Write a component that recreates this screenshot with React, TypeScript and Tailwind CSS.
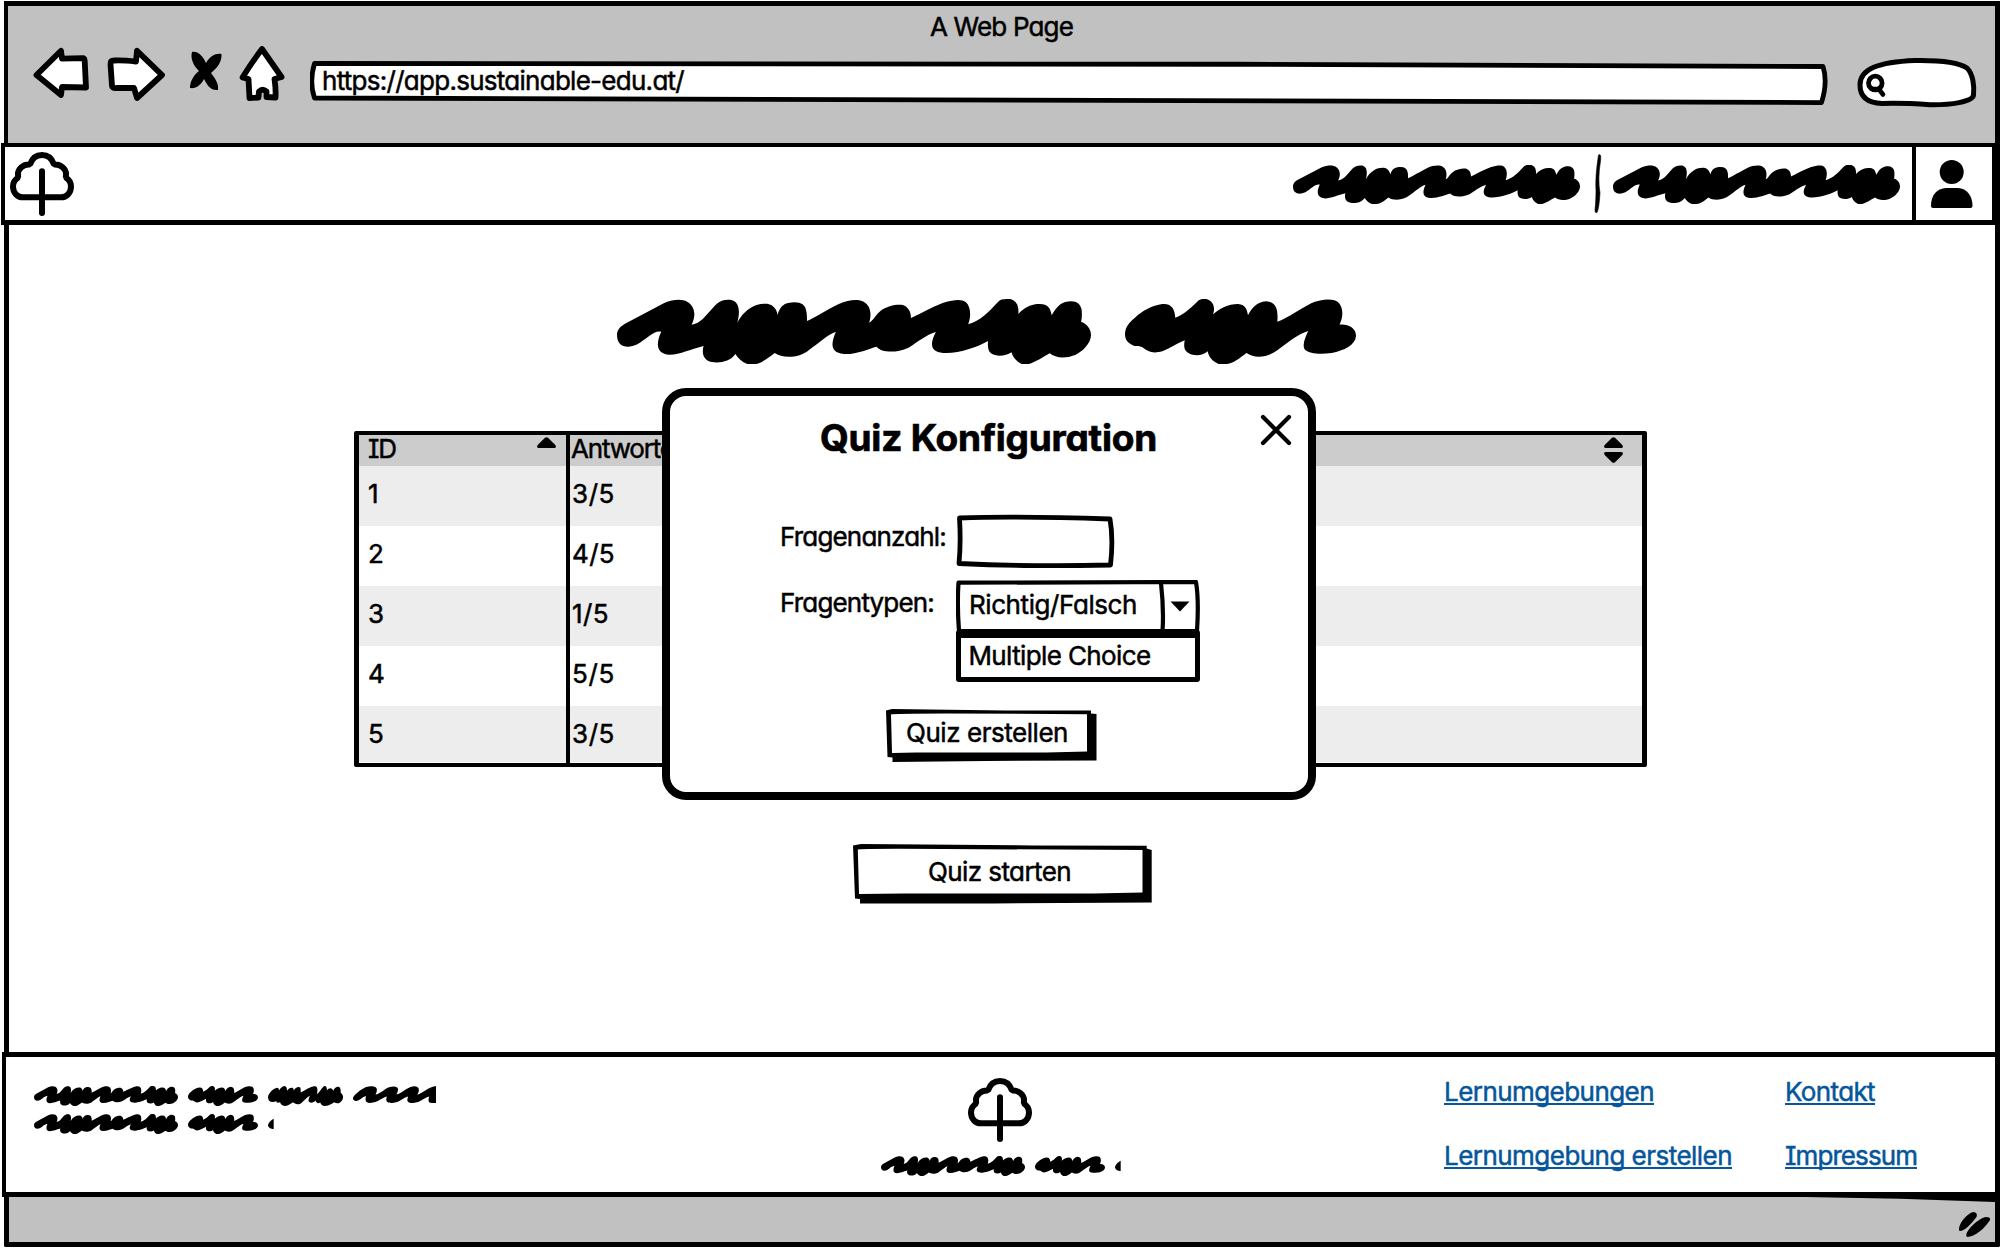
import { useLayoutEffect, useRef, useState, type ReactNode } from "react";

/** Single line of text whose tracking is adjusted so that it fills `w` pixels. */
function Fit({ w, className = "", children }: { w: number; className?: string; children: string }) {
  const ref = useRef<HTMLSpanElement>(null);
  const [spacing, setSpacing] = useState(0);
  useLayoutEffect(() => {
    if (ref.current) {
      const natural = ref.current.getBoundingClientRect().width;
      setSpacing((w - natural) / children.length);
    }
  }, [w, children]);
  return (
    <span ref={ref} className={`inline-block whitespace-pre ${className}`} style={{ letterSpacing: `${spacing}px` }}>
      {children}
    </span>
  );
}

const WORDS = {
  long: {
    box: "34 57 953 195",
    d: "M34 165C34 148 42 138 52 130L128 70C150 56 165 58 175 65C190 78 194 105 184 134C196 132 205 120 212 108L232 75C240 62 252 57 264 60C280 66 282 95 276 128C282 110 290 95 303 83C318 70 338 68 345 76C353 84 356 95 357 105C360 85 368 72 378 69C400 62 412 72 414 90C416 100 416 110 416 123C430 115 455 90 480 72C500 58 520 57 530 65C545 78 546 105 541 128C550 122 552 108 563 94C578 76 600 72 610 76C622 84 625 100 625 114C645 100 665 82 690 68C715 57 728 58 735 66C746 80 746 110 740 133C765 122 780 98 800 66C805 56 815 57 825 57C838 62 842 78 841 102C852 84 865 74 880 72C900 70 905 82 908 106C915 88 922 72 935 66C955 58 966 70 968 88C969 102 969 115 967 125C980 132 987 148 987 165C987 190 970 215 955 225C935 237 915 234 904 220C890 232 875 247 862 252L848 252C838 246 830 232 827 217C815 230 795 230 786 220C780 212 779 200 780 183C760 200 720 222 690 219C660 215 665 185 675 156C655 165 640 185 620 203C595 220 565 218 556 200C540 206 515 224 490 222C462 218 464 190 474 156C460 160 440 190 420 210C400 236 365 235 351 219C340 232 325 250 312 252L296 252C285 246 277 234 272 222C262 245 240 250 225 246C205 240 205 215 208 198C185 206 160 224 140 224C112 222 112 190 123 155C108 150 95 175 75 193C55 207 34 202 34 165Z",
  },
  short: {
    box: "1055 57 464 195",
    d: "M1055 163C1055 140 1065 125 1075 113C1090 92 1110 76 1130 72C1150 70 1155 90 1156 113C1172 104 1186 85 1200 65C1206 56 1214 57 1220 58C1234 66 1236 85 1232 103C1245 85 1262 72 1282 72C1298 74 1300 90 1302 106C1310 84 1320 66 1338 64C1358 66 1363 85 1361 125C1385 112 1405 88 1430 69C1450 56 1472 55 1482 65C1494 80 1494 110 1486 134C1505 132 1519 145 1519 168C1518 195 1495 212 1470 219C1445 224 1425 220 1417 210C1410 198 1416 175 1423 153C1405 160 1385 185 1365 206C1340 236 1315 235 1299 219C1285 235 1272 250 1260 252L1243 252C1230 244 1223 230 1221 214C1210 230 1190 229 1180 217C1173 208 1173 196 1175 181C1160 190 1145 205 1130 214C1110 222 1100 214 1090 202C1083 196 1078 198 1074 198C1062 192 1055 180 1055 163Z",
  },
  medium: {
    box: "805 139 224 59",
    d: "M805 172C806 160 820 146 832 144C836 144 838 148 838 152C842 146 848 139 854 139C860 139 862 146 862 153C866 146 872 143 878 144C882 147 882 150 882 153C886 142 898 140 902 144L903 158C915 152 930 142 942 140C954 138 954 150 951 163C960 158 966 142 974 139C980 139 981 146 981 152C986 144 996 142 1000 153C1004 143 1012 139 1018 142C1023 147 1022 153 1022 160C1029 163 1031 172 1027 180C1022 188 1012 194 1003 187C996 192 985 198 972 198C964 196 963 192 961 188C954 192 948 188 947 182C940 190 930 190 926 184C926 178 928 172 930 168C920 172 908 190 900 192C890 195 884 190 880 187C872 192 864 198 854 198C845 196 843 192 841 187C835 190 830 188 830 184C815 190 805 184 805 172Z",
  },
  waves: {
    box: "1061 139 247 59",
    d: "M1061 174C1063 166 1085 148 1100 142C1115 137 1133 139 1132 150C1132 156 1130 161 1128 164C1140 164 1155 148 1168 143C1185 137 1196 141 1195 150C1194 158 1191 163 1190 164C1205 162 1215 148 1232 142C1248 137 1258 142 1257 152C1256 158 1253 163 1252 165C1268 160 1282 144 1308 139V189H1296C1284 189 1284 180 1288 170C1275 172 1262 188 1240 189C1220 190 1221 180 1225 170C1212 172 1200 188 1178 189C1158 190 1158 180 1162 170C1150 172 1135 188 1112 189C1098 189 1096 180 1100 169C1090 168 1080 185 1068 183C1062 181 1060 177 1061 174Z",
  },
  cut: {
    box: "805 139 18 59",
    d: "M805 172C806 164 814 158 822 153V183C814 183 807 181 805 172Z",
  },
};

function Scribble({ word, className }: { word: keyof typeof WORDS; className: string }) {
  return (
    <svg viewBox={WORDS[word].box} preserveAspectRatio="none" className={`block shrink-0 ${className}`}>
      <path d={WORDS[word].d} />
    </svg>
  );
}

function Tree() {
  return (
    <svg viewBox="0 0 64 64" className="block size-16 shrink-0" fill="none" stroke="#000" strokeWidth="6" strokeLinejoin="bevel" strokeLinecap="round">
      <path d="M20 12.5C22 6.5 26.5 3 32 3S42 6.5 44 12.5C51 12 56 17 56 22C56 23.5 56 24.5 55.7 25.5C59 27.5 61 31 61 34.5C61 41 56.5 45.3 51 45.3H13C7.5 45.3 3 41 3 34.5C3 31 5 27.5 8.3 25.5C8 24.5 8 23.5 8 22C8 17 13 12 20 12.5Z" />
      <path d="M32 19.3V61" />
    </svg>
  );
}

function BrowserBar() {
  return (
    <header className="relative ml-1 mr-0.5 mt-px flex h-[142px] flex-col border-l-[4px] border-r-[5px] border-t-[5px] border-black bg-[#c1c1c1]">
      <div className="flex justify-center pt-2">
        <Fit w={143}>A Web Page</Fit>
      </div>
      <div className="mt-1.5 flex items-start">
        <svg className="ml-6 block h-[56px] w-[256px] shrink-0" viewBox="32 46 256 56" fill="#fff" stroke="#000" strokeWidth="5.800" strokeLinejoin="round">
          <path d="M36.500 75L61 50.800L62 58.700L83 58.200Q84.500 58.500 84.700 61L86 87.500L62 87L61 95Z" />
          <path d="M162 75L137 50.800L136 61.500Q122 60 114 60.500Q110 60.500 110.500 64L112 86Q112.500 88.500 117 88L134 88L137 98Z" />
          <path d="M262 49L281.500 77L274.500 79Q276 89 275.500 97.500L266.500 97V91.500Q262.500 88 259 91.500L258.500 97.500L249.500 98L248.500 79L242.500 77.500Q252 62 262 49Z" />
          <path stroke="none" fill="#000" d="M192 52C198 51 202 55 206 63C210 56 216 53 221.500 54C222 62 217 68 211 73C215 78 219 84 218 90C211 91 207 85 204 79C201 85 196 89 190 88C190 81 194 75 199 71C194 66 190 59 192 52Z" />
        </svg>
        <div className="relative ml-[22px] mt-[15px] flex h-11 w-[1518px] shrink-0 items-start pl-3 pt-[7px]">
          <svg className="absolute inset-0 h-11 w-[1518px]" viewBox="310 61 1518 44" fill="#fff" stroke="#000" strokeWidth="4.800" strokeLinejoin="round">
            <path d="M314.500 63.500C900 63 1300 64 1823 66.500Q1828 82 1821.500 102.600C1300 102.500 800 99.500 314.500 98Q309 82 314.500 63.500Z" />
          </svg>
          <Fit w={362} className="relative">https://app.sustainable-edu.at/</Fit>
        </div>
        <svg className="ml-7 mt-[9px] block h-[54px] w-[124px] shrink-0" viewBox="1856 54 124 54" fill="#fff" stroke="#000" strokeWidth="5" strokeLinecap="round">
          <path d="M1860 84C1860 68 1878 61 1915 59.500C1945 59 1961 63 1967 67C1973 73 1974.500 85 1973.500 94C1973 101 1950 104 1930 103.700C1912 102.500 1898 102 1882 102.500C1868 102 1860 96 1860 84Z" />
          <circle cx="1875.300" cy="82" r="6.800" strokeWidth="4.800" />
          <path strokeWidth="4.600" d="M1879.500 89L1883 93.500M1871.500 88L1880 88" />
        </svg>
      </div>
    </header>
  );
}

function NavBar() {
  return (
    <nav className="ml-px mr-0.5 flex h-[82px] border-b-[5px] border-l-[4px] border-r-[8px] border-t-[4px] border-black bg-white">
      <div className="grow pl-[5px] pt-[5px]">
        <Tree />
      </div>
      <Scribble word="long" className="mt-[18px] h-[39px] w-[287px]" />
      <svg className="ml-[13px] mr-px mt-[6px] block h-[62px] w-3 shrink-0" viewBox="0 0 12 62" stroke="#000" strokeWidth=".6">
        <path d="M5.500 2Q8.500 0 7.500 8Q4.500 26 7 40Q6 56 4 59.500Q1 61 2.500 52Q3 42 3 38Q2 24 5.500 2Z" />
      </svg>
      <Scribble word="long" className="ml-[7px] mt-[18px] h-[39px] w-[287px]" />
      <div className="ml-3 flex h-full w-[80px] shrink-0 border-l-[4px] border-black">
        <svg className="ml-[15px] mt-[13px] block h-12 w-[42px]" viewBox="0 0 42 48">
          <circle cx="20.700" cy="12" r="12" />
          <path d="M0 46C0 35 6 28.300 15 28H27C36 28.500 41.500 36 41.500 46Q41.500 48 39.500 48H2Q0 48 0 46Z" />
        </svg>
      </div>
    </nav>
  );
}

const ROWS = ["3/5", "4/5", "1/5", "5/5", "3/5"];

function SortUp() {
  return (
    <svg className="block h-[11px] w-[19px]" viewBox="0 0 19 11">
      <path d="M8 .8Q9.500-.5 11 .8L18.300 8Q20 11 17 11H2Q-1 11 .7 8Z" />
    </svg>
  );
}

function ResultTable() {
  return (
    <div className="mt-[67px] ml-[345px] flex h-[336px] w-[1293px] border-x-[5px] border-y-[4.500px] border-black rounded-[2px]">
      <div className="w-[207px] shrink-0">
        <div className="flex h-[31px] justify-between bg-[#ccc] pl-[9px]">
          <Fit w={28} className="mt-px">ID</Fit>
          <div className="mr-2.5 mt-0.5"><SortUp /></div>
        </div>
        {ROWS.map((_, i) => (
          <div key={i} className="flex h-[60px] items-start pl-[9px] pt-[15px] odd:bg-white even:bg-[#ededed] last:h-[56px]">
            {String(i + 1)}
          </div>
        ))}
      </div>
      <div className="h-[332px] w-1 shrink-0 bg-black" />
      <div className="grow">
        <div className="flex h-[31px] justify-between bg-[#ccc] pl-px">
          <Fit w={117} className="mt-px">Antworten</Fit>
          <div className="mr-[19px] mt-0.5 flex flex-col gap-1">
            <SortUp />
            <div className="rotate-180"><SortUp /></div>
          </div>
        </div>
        {ROWS.map((score, i) => (
          <div key={i} className="flex h-[60px] items-start pl-0.5 pt-[15px] odd:bg-white even:bg-[#ededed] last:h-[56px]">
            <Fit w={score[0] === "1" ? 37 : 43}>{score}</Fit>
          </div>
        ))}
      </div>
    </div>
  );
}

function SketchButton({ size, children }: { size: "sm" | "lg"; children: ReactNode }) {
  return size === "sm" ? (
    <button className="relative flex h-[53px] w-[211px] items-start justify-start pl-[20px] pt-[11px]">
      <svg className="absolute inset-0 h-[53px] w-[211px]" viewBox="0 0 211 53">
        <path d="M0 1.500L6 0L120 1.500L205 1.500V4.500L210.500 5V51.500L100 52L6.500 53V48.500L1.500 48Z" />
        <path fill="#fff" d="M5 5.500Q6 4.500 60 4.500L201 5.200V42.500L160 43.500L30 43.500L6 44Z" />
      </svg>
      <span className="relative">{children}</span>
    </button>
  ) : (
    <button className="relative flex h-[60px] w-[300px] items-start justify-start pl-[75px] pt-[15px]">
      <svg className="absolute inset-0 h-[60px] w-[300px]" viewBox="0 0 300 60">
        <path d="M0 1.500L8 0L180 1.500L293.700 1.700V4.500L298.700 6V58.500L140 59.500L7 59.500V55L2 54.500Z" />
        <path fill="#fff" d="M4.800 5.500Q8 4.500 90 5L289.500 6V48.500L240 49.500L50 49.500L6 50Z" />
      </svg>
      <span className="relative">{children}</span>
    </button>
  );
}

function QuizDialog() {
  return (
    <div role="dialog" className="absolute left-[653px] top-[163px] flex h-[412px] w-[654px] flex-col rounded-[24px] border-[8px] border-black bg-white">
      <h2 className="ml-[150px] mt-[23px] font-bold text-[37px] [-webkit-text-stroke:0.7px]">
        <Fit w={337}>Quiz Konfiguration</Fit>
      </h2>
      <svg className="absolute right-[16px] top-[18px] size-[32px]" viewBox="0 0 32 32" stroke="#000" strokeWidth="4.200" strokeLinecap="round">
        <path d="M3 3L29 29M29 3L3 29" />
      </svg>
      <div className="ml-[110px] mt-[58px] flex items-start">
        <Fit w={166} className="mt-2.5">Fragenanzahl:</Fit>
        <svg className="ml-[9px] block h-[54px] w-[162px]" viewBox="-1 -1 162 54" fill="#fff" stroke="#000" strokeWidth="4.800" strokeLinejoin="round">
          <path d="M3.500 3Q60 1 154 4Q157.500 24 154.500 50Q80 52 3 48.500Q5 28 3.500 3Z" />
        </svg>
      </div>
      <div className="ml-[110px] mt-[12px] flex items-start">
        <Fit w={154} className="mt-2.5">Fragentypen:</Fit>
        <div className="ml-[22px] flex w-[245px] flex-col">
          <div className="relative flex h-[50px] items-start pl-[13px] pt-[12px]">
            <svg className="absolute left-0 top-0 h-[53px] w-[245px]" viewBox="0 0 245 53" fill="none" stroke="#000" strokeWidth="4.200" strokeLinejoin="round">
              <path d="M2.500 2.700L240 2Q243 20 241 51L3 51Q1 25 2.500 2.700ZM205 3Q208 30 206.500 51" />
              <path stroke="none" fill="#000" d="M214.500 21.500H233.500L224 31.500Z" />
            </svg>
            <Fit w={168} className="relative">Richtig/Falsch</Fit>
          </div>
          <div className="relative flex h-[52px] w-[244px] items-start rounded-[3px] border-[5.500px] border-t-[8px] border-black bg-white pl-[7.500px] pt-[5px]">
            <Fit w={182}>Multiple Choice</Fit>
          </div>
        </div>
      </div>
      <div className="ml-[216px] mt-[27px]">
        <SketchButton size="sm"><Fit w={162}>Quiz erstellen</Fit></SketchButton>
      </div>
    </div>
  );
}

function FooterLink({ w, children }: { w: number; children: string }) {
  return (
    <a className="flex h-[29px] items-start border-b-2 border-[#05569b] pt-[2.500px] text-[#05569b]">
      <Fit w={w}>{children}</Fit>
    </a>
  );
}

function Footer() {
  return (
    <footer className="ml-0.5 mr-0.5 flex h-[145px] border-y-[5px] border-l-[4px] border-r-[5px] border-black bg-white">
      <div className="flex w-[846px] shrink-0 flex-col gap-2 pl-7 pt-[29px]">
        <div className="flex gap-2.5">
          <Scribble word="long" className="h-5 w-[144px]" />
          <Scribble word="short" className="h-5 w-[70px]" />
          <Scribble word="medium" className="h-5 w-[75px]" />
          <Scribble word="waves" className="h-5 w-[83px]" />
        </div>
        <div className="flex gap-2.5">
          <Scribble word="long" className="h-5 w-[144px]" />
          <Scribble word="short" className="h-5 w-[70px]" />
          <Scribble word="cut" className="h-5 w-1.5" />
        </div>
      </div>
      <div className="ml-7 flex w-60 shrink-0 flex-col items-center pt-[21px]">
        <Tree />
        <div className="ml-px mt-3.5 flex gap-2.5">
          <Scribble word="long" className="h-5 w-[144px]" />
          <Scribble word="short" className="h-5 w-[70px]" />
          <Scribble word="cut" className="h-5 w-1.5" />
        </div>
      </div>
      <div className="ml-[324px] flex flex-col items-start gap-[35px] pt-[19px]">
        <FooterLink w={210}>Lernumgebungen</FooterLink>
        <FooterLink w={288}>Lernumgebung erstellen</FooterLink>
      </div>
      <div className="ml-[53px] flex flex-col items-start gap-[35px] pt-[19px]">
        <FooterLink w={90}>Kontakt</FooterLink>
        <FooterLink w={132}>Impressum</FooterLink>
      </div>
    </footer>
  );
}

export default function App() {
  return (
    <div className="flex h-[1250px] w-[2002px] flex-col overflow-hidden bg-white font-['Inter',sans-serif] text-[26px] leading-none text-black [-webkit-text-stroke:0.5px] [font-feature-settings:'cv11','cv08','ss03']">
      <BrowserBar />
      <NavBar />
      <main className="relative ml-1 mr-0.5 flex h-[827px] flex-col border-x-[5px] border-black bg-white">
        <div className="ml-[608px] mt-[74px] flex gap-[34px]">
          <Scribble word="long" className="h-[65px] w-[474px]" />
          <Scribble word="short" className="h-[65px] w-[231px]" />
        </div>
        <ResultTable />
        <div className="ml-[844px] mt-[77px]">
          <SketchButton size="lg"><Fit w={143}>Quiz starten</Fit></SketchButton>
        </div>
        <QuizDialog />
      </main>
      <Footer />
      <div className="ml-1 mr-0.5 flex h-[50px] justify-end rounded-b-[2px] border-b-[5px] border-l-[5px] border-r-[5px] border-black bg-[#c1c1c1]">
        <svg className="block h-[45px] w-[190px]" viewBox="1805 1197 190 45">
          <path d="M1805 1197H1995V1202Q1900 1198 1805 1197Z" />
          <path d="M1959.500 1231C1957 1225 1968 1212 1974 1212Q1978 1213 1976.500 1217C1972 1223 1965 1231 1959.500 1231ZM1967 1237C1963 1232 1980 1217 1986 1217Q1991 1217 1990 1220C1985 1228 1975 1237 1967 1237Z" />
        </svg>
      </div>
    </div>
  );
}
